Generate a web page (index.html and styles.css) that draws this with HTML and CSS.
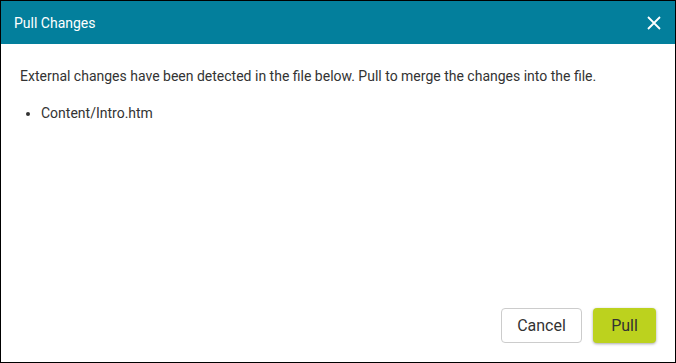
FILE: index.html
```html
<!DOCTYPE html>
<html lang="en">
<head>
    <meta charset="UTF-8">
    <title>Pull Changes</title>
    <link rel="stylesheet" href="styles.css">
</head>
<body>
    <div class="dialog">
        <div class="dialog-header">
            <span class="dialog-title">Pull Changes</span>
            <button class="close-btn" aria-label="Close">
                <svg width="14" height="14" viewBox="0 0 14 14">
                    <path d="M1 1 L13 13 M13 1 L1 13" stroke="#fff" stroke-width="1.8" fill="none"/>
                </svg>
            </button>
        </div>
        <div class="dialog-body">
            <p>External changes have been detected in the file below. Pull to merge the changes into the file.</p>
            <ul class="file-list">
                <li>Content/Intro.htm</li>
            </ul>
        </div>
        <div class="dialog-footer">
            <button class="btn btn-cancel">Cancel</button>
            <button class="btn btn-pull">Pull</button>
        </div>
    </div>
</body>
</html>
```

FILE: styles.css
```css
html, body {
    margin: 0;
    padding: 0;
}
body {
    font-family: Roboto, 'Liberation Sans', sans-serif;
    color: #333;
    background: #fff;
}
.dialog {
    box-sizing: border-box;
    width: 676px;
    height: 363px;
    border: 1px solid #000;
    display: flex;
    flex-direction: column;
}
.dialog-header {
    background-color: #037f9c;
    height: 43px;
    display: flex;
    align-items: center;
    justify-content: space-between;
    padding: 0 14px 0 13px;
}
.dialog-title {
    color: #fff;
    font-size: 14px;
}
.close-btn {
    background: none;
    border: none;
    padding: 0;
    width: 14px;
    height: 14px;
    cursor: pointer;
    display: flex;
}
.dialog-body {
    flex: 1;
    padding: 22px 19px 0;
    font-size: 14px;
}
.dialog-body p {
    margin: 0;
    line-height: 20px;
}
.file-list {
    margin: 17px 0 0;
    padding-left: 21px;
    line-height: 20px;
}
.dialog-footer {
    display: flex;
    justify-content: flex-end;
    gap: 11px;
    padding: 0 19px 19px;
}
.btn {
    font-family: inherit;
    font-size: 16px;
    height: 35px;
    border-radius: 4px;
    cursor: pointer;
    color: #333;
}
.btn-cancel {
    background: #fff;
    border: 1px solid #ccc;
    width: 81px;
}
.btn-pull {
    background: #bcd21e;
    border: none;
    width: 63px;
    box-shadow: 0 1px 3px rgba(0, 0, 0, 0.35);
}
```
